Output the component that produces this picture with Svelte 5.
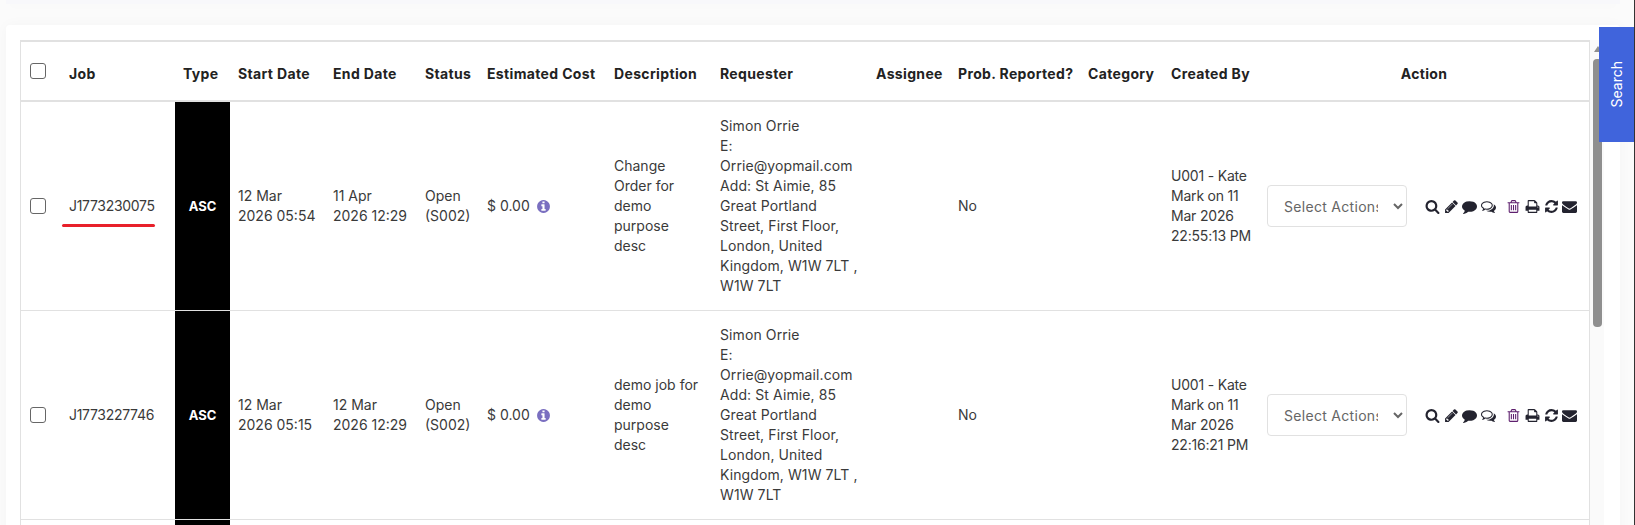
<script>
  const icons = {
    search: 'M1216 832q0-185-131.5-316.5t-316.5-131.5-316.5 131.5-131.5 316.5 131.5 316.5 316.5 131.5 316.5-131.5 131.5-316.5zm512 832q0 52-38 90t-90 38q-54 0-90-38l-343-342q-179 124-399 124-143 0-273.5-55.5t-225-150-150-225-55.5-273.5 55.5-273.5 150-225 225-150 273.5-55.5 273.5 55.5 225 150 150 225 55.5 273.5q0 220-124 399l343 343q37 37 37 90z',
    pencil: 'M491 1536l91-91-235-235-91 91v107h128v128h107zm523-928q0-22-22-22-10 0-17 7l-542 542q-7 7-7 17 0 22 22 22 10 0 17-7l542-542q7-7 7-17zm-54-192l416 416-832 832h-416v-416zm683 96q0 53-37 90l-166 166-416-416 166-165q36-38 90-38 53 0 91 38l235 234q37 39 37 91z',
    comment: 'M1792 896q0 174-120 321.5t-326 233-450 85.5q-70 0-145-8-198 175-460 242-49 14-114 22-17 2-30.5-9t-17.5-29v-1q-3-4-.5-12t2-10 4.5-9.5l6-9 7-8.5 8-9q7-8 31-34.5t34.5-38 31-39.5 32.5-51 27-59 26-76q-157-89-247.5-220t-90.5-281q0-130 71-248.5t191-204.5 286-136.5 348-50.5q244 0 450 85.5t326 233 120 321.5z',
    comments: 'M704 384q-153 0-286 52t-211.5 141-78.5 191q0 82 53 158t149 132l97 56-35 84q34-20 62-39l44-31 53 10q78 14 153 14 153 0 286-52t211.5-141 78.5-191-78.5-191-211.5-141-286-52zm0-128q191 0 353.5 68.5t256.5 186.5 94 257-94 257-256.5 186.5-353.5 68.5q-86 0-176-16-124 88-278 128-36 9-86 16h-3q-11 0-20.5-8t-11.5-21q-1-3-1-6.5t.5-6.5 2-6l2.5-5 3.5-5.5 4-5 4.5-5 4-4.5q5-6 23-25t26-29.5 22.5-29 25-38.5 20.5-44q-124-72-195-177t-71-224q0-139 94-257t256.5-186.5 353.5-68.5zm822 1169q10 24 20.5 44t25 38.5 22.5 29 26 29.5 23 25q1 1 4 4.5t4.5 5 4 5 3.5 5.5l2.5 5 2 6 .5 6.5-1 6.5q-3 14-13 22t-22 7q-50-7-86-16-154-40-278-128-90 16-176 16-271 0-472-132 58 4 88 4 161 0 309-45t264-129q125-92 192-212t67-254q0-77-23-152 129 71 204 178t75 230q0 120-71 224.5t-195 176.5z',
    trash: 'M704 736v576q0 14-9 23t-23 9h-64q-14 0-23-9t-9-23v-576q0-14 9-23t23-9h64q14 0 23 9t9 23zm256 0v576q0 14-9 23t-23 9h-64q-14 0-23-9t-9-23v-576q0-14 9-23t23-9h64q14 0 23 9t9 23zm256 0v576q0 14-9 23t-23 9h-64q-14 0-23-9t-9-23v-576q0-14 9-23t23-9h64q14 0 23 9t9 23zm128 724v-948h-896v948q0 22 7 40.5t14.5 27 10.5 8.5h832q3 0 10.5-8.5t14.5-27 7-40.5zm-672-1076h448l-48-117q-7-9-17-11h-317q-10 2-17 11zm928 32v64q0 14-9 23t-23 9h-96v948q0 83-47 143.5t-113 60.5h-832q-66 0-113-58.5t-47-141.5v-952h-96q-14 0-23-9t-9-23v-64q0-14 9-23t23-9h309l70-167q15-37 54-63t79-26h320q40 0 79 26t54 63l70 167h309q14 0 23 9t9 23z',
    print: 'M448 1536h896v-256h-896v256zm0-640h896v-384h-160q-40 0-68-28t-28-68v-160h-640v640zm1152 64q0-26-19-45t-45-19-45 19-19 45 19 45 45 19 45-19 19-45zm128 0v416q0 13-9.5 22.5t-22.5 9.5h-224v160q0 40-28 68t-68 28h-960q-40 0-68-28t-28-68v-160h-224q-13 0-22.5-9.5t-9.5-22.5v-416q0-79 56.5-135.5t135.5-56.5h64v-544q0-40 28-68t68-28h672q40 0 88 20t76 48l152 152q28 28 48 76t20 88v256h64q79 0 135.5 56.5t56.5 135.5z',
    refresh: 'M1639 1056q0 5-1 7-64 268-268 434.5t-478 166.5q-146 0-282.5-55t-243.5-157l-129 129q-19 19-45 19t-45-19-19-45v-448q0-26 19-45t45-19h448q26 0 45 19t19 45-19 45l-137 137q71 66 161 102t187 36q134 0 250-65t186-179q11-17 53-117 8-23 30-23h192q13 0 22.5 9.5t9.5 22.5zm25-800v448q0 26-19 45t-45 19h-448q-26 0-45-19t-19-45 19-45l138-138q-148-137-349-137-134 0-250 65t-186 179q-11 17-53 117-8 23-30 23h-199q-13 0-22.5-9.5t-9.5-22.5v-7q65-268 270-434.5t480-166.5q146 0 284 55.5t245 156.5l130-129q19-19 45-19t45 19 19 45z',
    envelope: 'M1792 710v794q0 66-47 113t-113 47h-1472q-66 0-113-47t-47-113v-794q44 49 101 87 362 246 497 345 57 42 92.5 65.5t94.5 48 110 24.5h2q51 0 110-24.5t94.5-48 92.5-65.5q170-123 498-345 57-39 100-87zm0-294q0 79-49 151t-122 123q-376 261-468 325-10 7-42.5 30.5t-54 38-52 32.5-57.5 27-50 9h-2q-23 0-50-9t-57.5-27-52-32.5-54-38-42.5-30.5q-91-64-262-182.5t-205-142.5q-62-42-117-115.5t-55-136.5q0-78 41.5-130t118.5-52h1472q65 0 112.5 47t47.5 113z',
    info: 'M1152 1376v-160q0-14-9-23t-23-9h-96v-512q0-14-9-23t-23-9h-320q-14 0-23 9t-9 23v160q0 14 9 23t23 9h96v320h-96q-14 0-23 9t-9 23v160q0 14 9 23t23 9h448q14 0 23-9t9-23zm-128-896v-160q0-14-9-23t-23-9h-192q-14 0-23 9t-9 23v160q0 14 9 23t23 9h192q14 0 23-9t9-23zm640 416q0 209-103 385.5t-279.5 279.5-385.5 103-385.5-103-279.5-279.5-103-385.5 103-385.5 279.5-279.5 385.5-103 385.5 103 279.5 279.5 103 385.5z'
  }

  const headers = ['Job', 'Type', 'Start Date', 'End Date', 'Status', 'Estimated Cost', 'Description', 'Requester', 'Assignee', 'Prob. Reported?', 'Category', 'Created By']
  const widths = [40, 114, 55, 95, 92, 62, 127, 106, 156, 82, 130, 83, 96, 156, 174]
  const actionIcons = ['search', 'pencil', 'comment', 'comments', 'trash', 'print', 'refresh', 'envelope']

  const requester = ['Simon Orrie', 'E:', 'Orrie@yopmail.com', 'Add: St Aimie, 85', 'Great Portland', 'Street, First Floor,', 'London, United', 'Kingdom, W1W 7LT ,', 'W1W 7LT']

  const jobs = [
    {
      id: 'J1773230075', marked: true,
      start: ['12 Mar', '2026 05:54'], end: ['11 Apr', '2026 12:29'],
      desc: ['Change', 'Order for', 'demo', 'purpose', 'desc'],
      created: ['U001 - Kate', 'Mark on 11', 'Mar 2026', '22:55:13 PM']
    },
    {
      id: 'J1773227746', marked: false,
      start: ['12 Mar', '2026 05:15'], end: ['12 Mar', '2026 12:29'],
      desc: ['demo job for', 'demo', 'purpose', 'desc'],
      created: ['U001 - Kate', 'Mark on 11', 'Mar 2026', '22:16:21 PM']
    }
  ]
</script>

{#snippet lines(items)}
  {#each items as line}<span class="line">{line}</span>{/each}
{/snippet}

{#snippet icon(name)}
  <svg class="icon icon--{name}" viewBox="0 0 1792 1792" aria-hidden="true"><path d={icons[name]} /></svg>
{/snippet}

<div class="page">
  <div class="top-card"></div>

  <div class="card">
    <div class="table-wrap">
      <table>
        <colgroup>
          {#each widths as w}<col style="width: {w}px" />{/each}
        </colgroup>
        <thead>
          <tr>
            <th class="check-cell"><input type="checkbox" /></th>
            {#each headers as h}<th>{h}</th>{/each}
            <th colspan="2" class="action-head">Action</th>
          </tr>
        </thead>
        <tbody>
          {#each jobs as job}
            <tr>
              <td class="check-cell"><input type="checkbox" /></td>
              <td>
                <span class="job-id" class:marked={job.marked}>{job.id}</span>
              </td>
              <td class="type-cell">ASC</td>
              <td>{@render lines(job.start)}</td>
              <td>{@render lines(job.end)}</td>
              <td>{@render lines(['Open', '(S002)'])}</td>
              <td>
                <span class="cost">$ 0.00 {@render icon('info')}</span>
              </td>
              <td>{@render lines(job.desc)}</td>
              <td class="requester">{@render lines(requester)}</td>
              <td></td>
              <td>No</td>
              <td></td>
              <td class="created">{@render lines(job.created)}</td>
              <td>
                <select>
                  <option>Select Actions</option>
                </select>
              </td>
              <td>
                <div class="actions">
                  {#each actionIcons as name}{@render icon(name)}{/each}
                </div>
              </td>
            </tr>
          {/each}
          <tr>
            <td colspan="2"></td>
            <td class="type-cell"></td>
            <td colspan="12"></td>
          </tr>
        </tbody>
      </table>
    </div>

    <div class="scrollbar">
      <div class="arrow"></div>
      <div class="thumb"></div>
    </div>
  </div>

  <button class="search-tab"><span>Search</span></button>
  <div class="edge"></div>
</div>

<style>
  :global(body) {
    margin: 0;
    background: #fbfbfb;
  }

  .page {
    position: relative;
    height: 525px;
    overflow: hidden;
    padding: 0 15px 0 6px;
    box-sizing: border-box;
    font-family: Inter, "Liberation Sans", sans-serif;
    font-size: 14px;
    line-height: 20px;
    color: #3a3a3a;
  }

  .top-card {
    height: 4px;
    background: #f8f8fb;
    margin-bottom: 21px;
    box-shadow: 0 2px 12px rgba(0, 0, 0, 0.02);
  }

  .card {
    display: flex;
    background: #fff;
    padding: 15px 0 0 14px;
    height: 600px;
    border-radius: 4px;
    box-shadow: 0 0 14px rgba(0, 0, 0, 0.03);
  }

  .table-wrap {
    width: 1570px;
    flex: none;
    border: 1px solid #e1e1e1;
    border-top: 2px solid #e1e1e1;
    border-bottom: none;
    box-sizing: border-box;
  }

  table {
    table-layout: fixed;
    width: 1568px;
    border-collapse: collapse;
  }

  th {
    height: 59px;
    padding: 6px 0 0 8px;
    box-sizing: border-box;
    text-align: left;
    font-weight: 700;
    letter-spacing: 0.35px;
    color: #222;
    white-space: nowrap;
    border-bottom: 2px solid #e1e1e1;
  }

  th.action-head {
    text-align: center;
    padding-left: 0;
  }

  td {
    height: 208px;
    padding: 14px 0 14px 8px;
    box-sizing: border-box;
    white-space: nowrap;
    border-bottom: 1px solid #e1e1e1;
  }

  .check-cell {
    padding: 0 0 0 9px;
  }

  th.check-cell {
    padding: 0 0 0 9px;
  }

  input[type="checkbox"] {
    appearance: none;
    display: block;
    width: 16px;
    height: 16px;
    margin: 0;
    background: #fff;
    border: 1px solid #666;
    border-radius: 3px;
    box-sizing: border-box;
  }

  .line {
    display: block;
  }

  .requester {
    letter-spacing: 0.1px;
  }

  .created {
    letter-spacing: -0.2px;
  }

  .job-id {
    position: relative;
    display: inline-block;
    letter-spacing: -0.3px;
  }

  .job-id.marked::after {
    content: "";
    position: absolute;
    left: -7px;
    right: 0;
    bottom: -11px;
    height: 3px;
    border-radius: 2px;
    background: #e8202a;
  }

  td.type-cell {
    padding: 0;
    background: #000;
    color: #fff;
    font-size: 13px;
    font-weight: 700;
    text-align: center;
  }

  .cost {
    display: flex;
    align-items: center;
    gap: 6px;
  }

  select {
    display: block;
    width: 140px;
    height: 42px;
    padding: 0 12px;
    font: inherit;
    letter-spacing: 0.3px;
    color: #666;
    background: #fff;
    border: 1px solid #e1e1e1;
    border-radius: 4px;
  }

  .actions {
    display: flex;
    gap: 3.6px;
    margin-left: 2px;
  }

  .icon {
    width: 15px;
    height: 15px;
    flex: none;
    fill: #23232f;
  }

  .icon--info {
    fill: #7a6fc0;
  }

  .icon--trash {
    fill: #5e1f6e;
    margin-left: 7px;
  }

  .scrollbar {
    flex: none;
    width: 14px;
    height: 100%;
    padding: 6px 0 0 3px;
    box-sizing: border-box;
    background: #fafafa;
  }

  .arrow {
    width: 0;
    height: 0;
    margin-left: 1px;
    border: 4px solid transparent;
    border-top: 0;
    border-bottom: 6px solid #8f8f8f;
  }

  .thumb {
    width: 9px;
    height: 268px;
    margin-top: 7px;
    border-radius: 4px;
    background: #8f8f8f;
  }

  .search-tab {
    position: absolute;
    top: 27px;
    right: 1px;
    width: 35px;
    height: 115px;
    padding: 0;
    border: none;
    background: #4064dc;
    color: #fff;
    font: inherit;
    display: flex;
    align-items: center;
    justify-content: center;
  }

  .search-tab span {
    writing-mode: vertical-rl;
    transform: rotate(180deg);
  }

  .edge {
    position: absolute;
    top: 0;
    right: 0;
    bottom: 0;
    width: 1px;
    background: #333;
  }
</style>
